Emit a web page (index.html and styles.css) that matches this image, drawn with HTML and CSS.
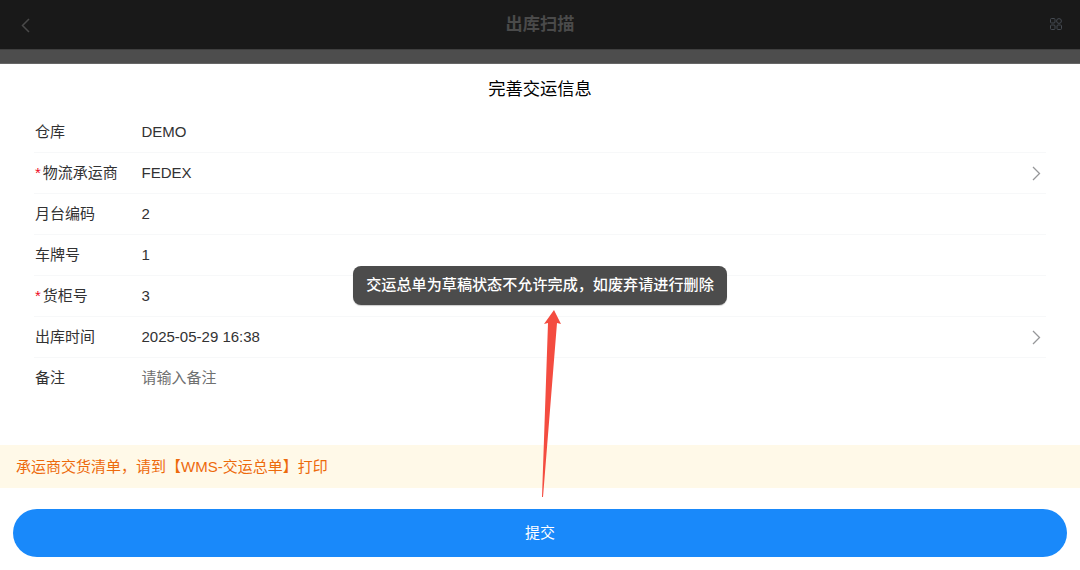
FILE: index.html
```html
<!DOCTYPE html>
<html lang="zh-CN">
<head>
<meta charset="utf-8">
<title>出库扫描</title>
<link rel="stylesheet" href="styles.css">
</head>
<body>
<div class="page">
  <header class="navbar">
    <svg class="nav-back" width="10" height="15" viewBox="0 0 10 15"><path d="M8 1 L1.5 7.5 L8 14" fill="none" stroke="#4a4a4a" stroke-width="1.5"/></svg>
    <div class="nav-title">出库扫描</div>
    <svg class="nav-grid" width="12" height="12" viewBox="0 0 12 12" fill="none" stroke="#454a52" stroke-width="1">
      <rect x="0.5" y="0.5" width="4.5" height="4.5" rx="1"/>
      <circle cx="9" cy="3" r="2.4"/>
      <rect x="0.5" y="7" width="4.5" height="4.5" rx="1"/>
      <rect x="7" y="7" width="4.5" height="4.5" rx="1"/>
    </svg>
  </header>
  <div class="backdrop-strip"></div>
  <main class="sheet">
    <h1 class="sheet-title">完善交运信息</h1>
    <div class="form">
      <div class="row"><div class="label">仓库</div><div class="value">DEMO</div></div>
      <div class="row"><div class="label"><span class="req">*</span>物流承运商</div><div class="value">FEDEX</div>
        <svg class="chevron" width="9" height="15" viewBox="0 0 9 15"><path d="M1 1 L7.5 7.5 L1 14" fill="none" stroke="#969799" stroke-width="1.3"/></svg></div>
      <div class="row"><div class="label">月台编码</div><div class="value">2</div></div>
      <div class="row"><div class="label">车牌号</div><div class="value">1</div></div>
      <div class="row"><div class="label"><span class="req">*</span>货柜号</div><div class="value">3</div></div>
      <div class="row"><div class="label">出库时间</div><div class="value">2025-05-29 16:38</div>
        <svg class="chevron" width="9" height="15" viewBox="0 0 9 15"><path d="M1 1 L7.5 7.5 L1 14" fill="none" stroke="#969799" stroke-width="1.3"/></svg></div>
      <div class="row last"><div class="label">备注</div><div class="value placeholder">请输入备注</div></div>
    </div>
    <div class="notice">承运商交货清单，请到【WMS-交运总单】打印</div>
    <div class="actions"><button class="submit" type="button">提交</button></div>
  </main>
  <div class="toast">交运总单为草稿状态不允许完成，如废弃请进行删除</div>
  <svg class="arrow" width="1080" height="570" viewBox="0 0 1080 570"><path d="M554 310 L561 324 L557 323 L543 497 L542 497 L548 323 L544 324 Z" fill="#f44c40"/></svg>
</div>
</body>
</html>
```
FILE: styles.css
```css
* { box-sizing: border-box; }
html, body { margin: 0; padding: 0; }
body {
  font-family: "Liberation Sans", "Noto Sans CJK SC", sans-serif;
  color: #323233;
  background: #fff;
}
.page {
  position: relative;
  width: 1080px;
  height: 570px;
  display: flex;
  flex-direction: column;
  overflow: hidden;
}
.navbar {
  height: 49px;
  flex: none;
  background: #191919;
  display: flex;
  align-items: center;
  justify-content: space-between;
  padding: 0 18px 0 21px;
  position: relative;
}
.nav-back { margin-top: 2px; }
.nav-grid { margin-top: -1px; }
.nav-title {
  position: absolute;
  left: 0;
  right: 0;
  top: 0;
  line-height: 49px;
  text-align: center;
  font-size: 17.2px;
  font-weight: 700;
  color: #4a4a4a;
}
.backdrop-strip {
  height: 15px;
  flex: none;
  background: #4d4d4d;
  border-top: 1px solid #3f3f3f;
  border-bottom: 1px solid #666;
}
.sheet {
  flex: 1;
  min-height: 0;
  display: flex;
  flex-direction: column;
  background: #fff;
}
.sheet-title {
  margin: 0;
  height: 48px;
  line-height: 50px;
  text-align: center;
  font-size: 17.3px;
  font-weight: 400;
  color: #000;
}
.form {
  padding: 0 34px;
  height: 333px;
  flex: none;
}
.row {
  height: 41px;
  display: flex;
  align-items: center;
  border-bottom: 1px solid #f7f8f9;
  font-size: 15px;
}
.row.last { border-bottom: 0; }
.label {
  width: 107.5px;
  flex: none;
  font-size: 15px;
  line-height: 40px;
  padding-left: 1px;
  margin-top: -1px;
  white-space: nowrap;
}
.req { color: #ee0a24; font-size: 15px; margin-right: 2px; }
.value { flex: 1; font-size: 15px; line-height: 40px; }
.placeholder { color: #6f7070; margin-top: -2px; }
.chevron { flex: none; margin-right: 5px; }
.notice {
  height: 43px;
  line-height: 43px;
  padding-left: 16px;
  background: #fff9e8;
  color: #ed6a0c;
  font-size: 15px;
  flex: none;
}
.actions {
  padding: 21px 13px 0;
}
.submit {
  display: block;
  width: 100%;
  height: 48px;
  border: 0;
  border-radius: 24px;
  background: #1989fa;
  color: #fff;
  font: inherit;
  font-size: 15px;
  line-height: 47px;
  padding: 0 0 1px;
}
.toast {
  position: absolute;
  left: 353px;
  top: 266px;
  width: 374px;
  height: 39px;
  line-height: 38px;
  text-align: center;
  background: #4c4c4c;
  color: #fff;
  border-radius: 8px;
  box-shadow: 0 1px 1px rgba(0, 0, 0, 0.2);
  font-size: 15.12px;
  font-weight: 500;
  white-space: nowrap;
}
.arrow {
  position: absolute;
  left: 0;
  top: 0;
  pointer-events: none;
}
```
